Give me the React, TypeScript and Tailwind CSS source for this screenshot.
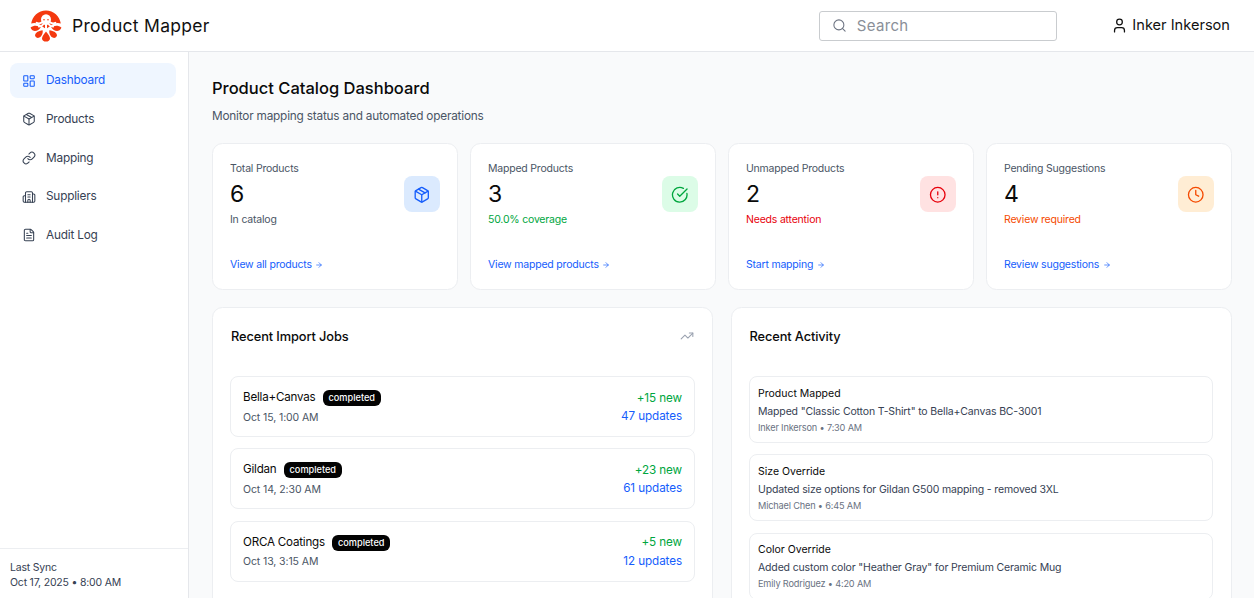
import React from 'react';
import {
  LayoutDashboard,
  Package,
  Link as LinkIcon,
  Building2,
  FileText,
  Search,
  User,
  CircleCheckBig,
  CircleAlert,
  Clock,
  ArrowRight,
  TrendingUp,
} from 'lucide-react';

const nav = [
  { label: 'Dashboard', icon: LayoutDashboard, active: true },
  { label: 'Products', icon: Package },
  { label: 'Mapping', icon: LinkIcon },
  { label: 'Suppliers', icon: Building2 },
  { label: 'Audit Log', icon: FileText },
];

const stats = [
  { title: 'Total Products', value: '6', note: 'In catalog', noteCls: 'text-[#4a5565]', link: 'View all products', icon: Package, box: 'bg-[#dbeafe]', iconCls: 'text-[#155dfc]' },
  { title: 'Mapped Products', value: '3', note: '50.0% coverage', noteCls: 'text-[#00a63e]', link: 'View mapped products', icon: CircleCheckBig, box: 'bg-[#dcfce7]', iconCls: 'text-[#00a63e]' },
  { title: 'Unmapped Products', value: '2', note: 'Needs attention', noteCls: 'text-[#e7000b]', link: 'Start mapping', icon: CircleAlert, box: 'bg-[#ffe2e2]', iconCls: 'text-[#e7000b]' },
  { title: 'Pending Suggestions', value: '4', note: 'Review required', noteCls: 'text-[#f54a00]', link: 'Review suggestions', icon: Clock, box: 'bg-[#ffedd4]', iconCls: 'text-[#f54a00]' },
];

const jobs = [
  { name: 'Bella+Canvas', date: 'Oct 15, 1:00 AM', added: '+15 new', updates: '47 updates' },
  { name: 'Gildan', date: 'Oct 14, 2:30 AM', added: '+23 new', updates: '61 updates' },
  { name: 'ORCA Coatings', date: 'Oct 13, 3:15 AM', added: '+5 new', updates: '12 updates' },
];

const activity = [
  { title: 'Product Mapped', text: 'Mapped "Classic Cotton T-Shirt" to Bella+Canvas BC-3001', meta: 'Inker Inkerson • 7:30 AM' },
  { title: 'Size Override', text: 'Updated size options for Gildan G500 mapping - removed 3XL', meta: 'Michael Chen • 6:45 AM' },
  { title: 'Color Override', text: 'Added custom color "Heather Gray" for Premium Ceramic Mug', meta: 'Emily Rodriguez • 4:20 AM' },
];

function Logo() {
  return (
    <svg width="32" height="32" viewBox="0 0 32 32" className="shrink-0">
      {/* dome */}
      <path d="M1.2 13.5C2.2 6 8.4.4 16 .4s13.800 5.600 14.800 13.100c-2.400-.9-5.200-.6-7.600.6L16 19l-7.200-4.900c-2.400-1.200-5.200-1.500-7.600-.6z" fill="#f4390f" />
      {/* petals */}
      <path d="M.6 17.600c2.800-2.400 6.600-2.600 10.200-.4-1.600 3-5 4.400-7.800 3.400-1.200-.5-2-1.600-2.400-3z" fill="#f4390f" />
      <path d="M31.400 17.600c-2.800-2.400-6.600-2.600-10.200-.4 1.600 3 5 4.400 7.800 3.400 1.200-.5 2-1.600 2.400-3z" fill="#f4390f" />
      <path d="M12.600 20.200c.6 3.200-1 6.600-3.800 7.600-1.600.5-3.400-.5-3.700-2.200-.4-2.600 3.300-5 7.500-5.400z" fill="#f4390f" />
      <path d="M19.400 20.200c-.6 3.200 1 6.600 3.800 7.600 1.600.5 3.400-.5 3.700-2.200.4-2.600-3.300-5-7.500-5.400z" fill="#f4390f" />
      <path d="M16 21.400c2.200 2.600 4 5 4 7 0 2-1.800 3.200-4 3.200s-4-1.200-4-3.200c0-2 1.800-4.400 4-7z" fill="#f4390f" />
      {/* octopus */}
      <ellipse cx="16" cy="9.600" rx="5" ry="5.400" fill="#fff" />
      <path d="M11.600 12.500c-1.600 1.200-3.300 1.200-5 .4M20.400 12.500c1.600 1.200 3.300 1.200 5 .4M13 14.500c-1 1.400-2.400 2-4 2.100M19 14.500c1 1.400 2.400 2 4 2.100M16 14v5" stroke="#fff" strokeWidth="2" strokeLinecap="round" fill="none" />
      <circle cx="14" cy="9.800" r=".8" fill="#f4390f" />
      <circle cx="18" cy="9.800" r=".8" fill="#f4390f" />
    </svg>
  );
}

function StatCard({ s }: { s: (typeof stats)[number] }) {
  const Icon = s.icon;
  return (
    <div className="flex h-[147px] flex-col rounded-[10.500px] border border-[#eceef1] bg-white px-[17px] pt-[18px]">
      <div className="flex items-center justify-between">
        <div>
          <p className="text-[10.500px] leading-[14px] tracking-[-0.2px] text-[#4a5565]">{s.title}</p>
          <p className="mt-[4px] text-[23px] leading-[28px] text-[#0a0a0a]">{s.value}</p>
          <p className={`mt-[4.500px] text-[10.500px] leading-[14px] tracking-[-0.2px] ${s.noteCls}`}>{s.note}</p>
        </div>
        <div className={`flex h-9 w-9 items-center justify-center rounded-[8px] ${s.box}`}>
          <Icon className={`h-[17.500px] w-[17.500px] ${s.iconCls}`} strokeWidth={1.800} />
        </div>
      </div>
      <a className="mt-[31px] flex items-center gap-[3.500px] text-[10.500px] leading-[14px] tracking-[-0.2px] text-[#155dfc]">
        {s.link}
        <ArrowRight className="h-[8px] w-[8px]" strokeWidth={2} />
      </a>
    </div>
  );
}

function JobRow({ job }: { job: (typeof jobs)[number] }) {
  return (
    <div className="flex h-[61px] items-center justify-between rounded-[8px] border border-[#eceef1] px-3">
      <div className="pt-[2px]">
        <div className="flex items-center gap-[7px]">
          <span className="text-[11.600px] leading-[17.500px] tracking-[-0.2px] text-[#0a0a0a]">{job.name}</span>
          <span className="rounded-[6px] bg-[#030303] px-[6px] py-[2px] text-[9.200px] font-medium leading-[12px] text-white">completed</span>
        </div>
        <p className="mt-[2px] text-[10.500px] leading-[17.500px] tracking-[-0.1px] text-[#4a5565]">{job.date}</p>
      </div>
      <div className="pt-[2px] text-right text-[11.700px] leading-[17.500px] tracking-[-0.1px]">
        <p className="text-[#00a63e]">{job.added}</p>
        <p className="mt-[1px] text-[#155dfc]">{job.updates}</p>
      </div>
    </div>
  );
}

function ActivityRow({ item }: { item: (typeof activity)[number] }) {
  return (
    <div className="h-[67px] shrink-0 rounded-[8px] border border-[#eceef1] px-[8.500px] pt-[9.500px]">
      <p className="text-[10.500px] leading-[14px] text-[#0a0a0a]">{item.title}</p>
      <p className="mt-[4px] text-[10.500px] leading-[14px] tracking-[-0.15px] text-[#364153]">{item.text}</p>
      <p className="mt-[3px] text-[9.200px] leading-[12px] tracking-[-0.17px] text-[#6a7282]">{item.meta}</p>
    </div>
  );
}

export default function App() {
  return (
    <div className="flex h-[598px] w-[1254px] flex-col overflow-hidden bg-white font-['Inter',sans-serif]">
      <header className="flex h-[52px] shrink-0 items-center border-b border-[#e5e7eb] bg-white pl-[30px] pr-6">
        <Logo />
        <span className="ml-[10px] mt-[1px] text-[17.500px] tracking-[0.300px] text-[#111111]">Product Mapper</span>
        <div className="ml-auto flex h-[30px] w-[238px] items-center rounded-[3px] border border-[#c9cccf] px-[11.500px]">
          <Search className="h-[15px] w-[15px] text-[#6b7280]" strokeWidth={1.700} />
          <span className="ml-[10px] mt-[1px] text-[15px] tracking-[0.300px] text-[#8a8f98]">Search</span>
        </div>
        <div className="ml-[54px] flex items-center gap-[4px]">
          <User className="h-[17px] w-[17px] text-[#111111]" strokeWidth={1.800} />
          <span className="mt-[1px] text-[14.600px] text-[#111111]">Inker Inkerson</span>
        </div>
      </header>

      <div className="flex min-h-0 flex-1">
        <aside className="flex w-[189px] shrink-0 flex-col border-r border-[#e5e7eb] bg-white">
          <nav className="flex flex-col gap-[3.700px] pl-[10px] pr-[12px] pt-[11px]">
            {nav.map((item) => {
              const Icon = item.icon;
              return (
                <a
                  key={item.label}
                  className={`flex h-[35px] items-center gap-[10px] rounded-[8px] px-3 text-[11.800px] tracking-[-0.2px] ${item.active ? 'bg-[#eff6ff] text-[#155dfc]' : 'text-[#364153]'}`}
                >
                  <Icon className="h-[14px] w-[14px]" strokeWidth={1.800} />
                  <span className="mt-[1.500px]">{item.label}</span>
                </a>
              );
            })}
          </nav>
          <div className="mt-auto h-[50px] border-t border-[#eceef1] pl-[10px] pt-[11px] text-[10.500px] leading-[15px] tracking-[-0.2px] text-[#364153]">
            <p>Last Sync</p>
            <p>Oct 17, 2025 • 8:00 AM</p>
          </div>
        </aside>

        <main className="min-w-0 flex-1 overflow-hidden bg-[#f9fafb] pl-[23px] pr-[22px] pt-[24px]">
          <h1 className="text-[16.500px] font-medium leading-[24px] text-[#0a0a0a]">Product Catalog Dashboard</h1>
          <p className="mt-[7px] text-[11.800px] leading-[18px] tracking-[-0.2px] text-[#4a5565]">Monitor mapping status and automated operations</p>

          <div className="mt-[18px] grid grid-cols-4 gap-3">
            {stats.map((s) => (
              <StatCard key={s.title} s={s} />
            ))}
          </div>

          <div className="mt-[17px] grid grid-cols-2 gap-[18px]">
            <section className="h-[320px] rounded-[10.500px] border border-[#eceef1] bg-white px-[18px] pt-[18px]">
              <div className="flex h-[20px] items-center justify-between">
                <h2 className="mt-[1px] text-[12.800px] font-medium tracking-[-0.1px] text-[#0a0a0a]">Recent Import Jobs</h2>
                <TrendingUp className="h-[14px] w-[14px] text-[#99a1af]" strokeWidth={1.800} />
              </div>
              <div className="-mx-px mt-[30px] flex flex-col gap-[11.400px]">
                {jobs.map((job) => (
                  <JobRow key={job.name} job={job} />
                ))}
              </div>
            </section>

            <section className="h-[320px] rounded-[10.500px] border border-[#eceef1] bg-white px-[17.500px] pt-[18px]">
              <h2 className="h-[20px] pt-[1px] text-[12.800px] font-medium leading-[20px] tracking-[-0.1px] text-[#0a0a0a]">Recent Activity</h2>
              <div className="-ml-px mr-px mt-[30px] flex flex-col gap-[11.400px]">
                {activity.map((item) => (
                  <ActivityRow key={item.title} item={item} />
                ))}
              </div>
            </section>
          </div>
        </main>
      </div>
    </div>
  );
}
